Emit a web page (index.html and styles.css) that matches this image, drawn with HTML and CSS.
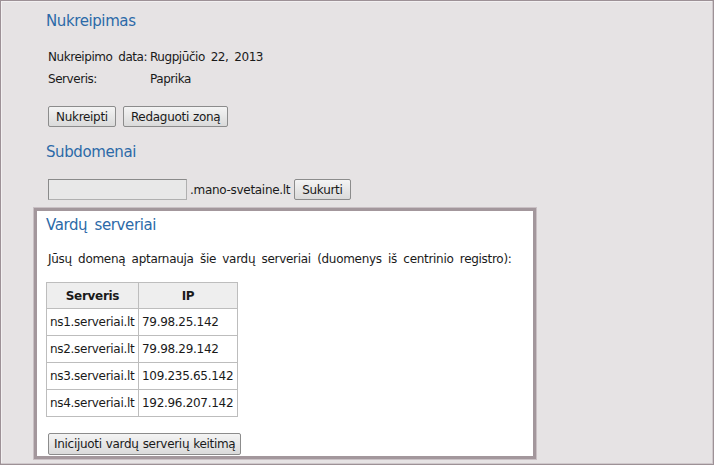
FILE: index.html
```html
<!DOCTYPE html>
<html lang="lt">
<head>
    <meta charset="UTF-8">
    <title>Domeno valdymas</title>
    <link rel="stylesheet" href="styles.css">
</head>
<body>
    <div class="frame">
        <div class="section">
            <h2>Nukreipimas</h2>
            <table class="info">
                <tr><td class="label">Nukreipimo data:</td><td>Rugpjūčio 22, 2013</td></tr>
                <tr><td class="label">Serveris:</td><td>Paprika</td></tr>
            </table>
            <div class="actions">
                <button>Nukreipti</button>
                <button>Redaguoti zoną</button>
            </div>
        </div>

        <div class="section">
            <h2>Subdomenai</h2>
            <div class="subdomain">
                <input type="text">
                <span class="suffix">.mano-svetaine.lt</span>
                <button>Sukurti</button>
            </div>
        </div>

        <div class="boxed">
            <h2>Vardų serveriai</h2>
            <p class="note">Jūsų domeną aptarnauja šie vardų serveriai (duomenys iš centrinio registro):</p>
            <table class="ns">
                <tr><th>Serveris</th><th>IP</th></tr>
                <tr><td>ns1.serveriai.lt</td><td>79.98.25.142</td></tr>
                <tr><td>ns2.serveriai.lt</td><td>79.98.29.142</td></tr>
                <tr><td>ns3.serveriai.lt</td><td>109.235.65.142</td></tr>
                <tr><td>ns4.serveriai.lt</td><td>192.96.207.142</td></tr>
            </table>
            <button class="wide">Inicijuoti vardų serverių keitimą</button>
        </div>
    </div>
</body>
</html>
```

FILE: styles.css
```css
:root {
    --bg: #e6e3e4;
    --frame: #9d9196;
    --heading: #2c6aa8;
    --text: #1a1a1a;
    --cell-border: #bdbdbd;
}

* {
    box-sizing: border-box;
    margin: 0;
    padding: 0;
}

body {
    font-family: 'DejaVu Sans', sans-serif;
    font-size: 12px;
    line-height: 14px;
    letter-spacing: -0.3px;
    word-spacing: 2.5px;
    color: var(--text);
    background: var(--bg);
}

.frame {
    height: 465px;
    border: 1px solid var(--frame);
    box-shadow: inset -1px -1px 0 #cfc8cb, inset 1px 1px 0 #f2f0f1;
    padding-top: 9px;
}

.section {
    padding-left: 45px;
}

.section + .section {
    margin-top: 14px;
}

h2 {
    font-size: 15px;
    font-weight: normal;
    letter-spacing: -0.4px;
    word-spacing: 3px;
    color: var(--heading);
    line-height: 22px;
}

.info {
    border-collapse: collapse;
    margin: 14px 0 0 2px;
    letter-spacing: -0.45px;
}

.info td {
    padding: 0;
    height: 22px;
    white-space: nowrap;
    vertical-align: middle;
}

.info .label {
    width: 102px;
}

.actions {
    display: flex;
    gap: 7px;
    margin: 16px 0 0 2px;
}

button {
    font-family: inherit;
    font-size: 12px;
    letter-spacing: inherit;
    word-spacing: 0.5px;
    color: var(--text);
    background: linear-gradient(#f4f4f4, #dadada);
    border: 1px solid #8c8c8c;
    border-radius: 2px;
    height: 21px;
    padding: 0 7px;
}

.subdomain {
    display: flex;
    align-items: center;
    margin: 16px 0 0 2px;
}

.subdomain input {
    width: 139px;
    height: 21px;
    background: #e8e8e8;
    border: 1px solid #b0b0b0;
    border-top-color: #8a8a8a;
    border-left-color: #8a8a8a;
}

.suffix {
    margin: 0 4px 0 3px;
}

.boxed {
    width: 502px;
    height: 251px;
    margin: 8px 0 0 33px;
    padding: 3px 0 0 9px;
    background: #fff;
    border: 3px solid #a3979c;
    box-shadow: 0 0 0 1px #c9c0c4;
}

.note {
    margin: 16px 0 0 2px;
    word-spacing: 2.8px;
}

.ns {
    border-collapse: collapse;
    margin-top: 16px;
}

.ns th,
.ns td {
    border: 1px solid var(--cell-border);
    height: 27px;
    padding: 0 3px;
    text-align: left;
    white-space: nowrap;
    vertical-align: middle;
}

.ns th {
    height: 26px;
    background: #eeeeee;
    text-align: center;
    width: 92px;
}

.ns th + th {
    width: 99px;
}

.wide {
    height: 22px;
    margin: 16px 0 0 2px;
    padding: 0 5px;
}
```
